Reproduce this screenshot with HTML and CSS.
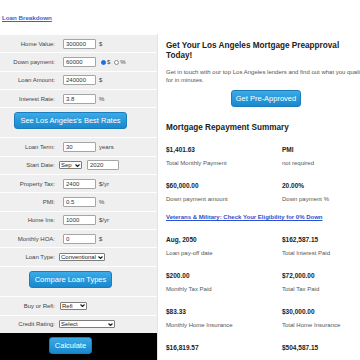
FILE: index.html
```html
<!DOCTYPE html>
<html lang="en">
<head>
    <meta charset="UTF-8">
    <meta name="viewport" content="width=device-width, initial-scale=1.0">
    <title>Los Angeles Mortgage Calculator</title>
    <link rel="stylesheet" href="styles.css">
</head>
<body>

    <div class="top">
        <a href="#">Loan Breakdown</a>
    </div>

    <div class="main">
        <!-- Left side (calculator form) -->
        <form class="calc">
            <div class="row">
                <label>Home Value:</label>
                <input type="text" value="300000"><span>$</span>
            </div>
            <div class="row">
                <label>Down payment:</label>
                <input type="text" value="60000">
                <input type="radio" name="dp" class="radio" checked><span>$</span>
                <input type="radio" name="dp" class="radio second"><span>%</span>
            </div>
            <div class="row">
                <label>Loan Amount:</label>
                <input type="text" value="240000"><span>$</span>
            </div>
            <div class="row">
                <label>Interest Rate:</label>
                <input type="text" value="3.8"><span>%</span>
            </div>
            <div class="row btn-row">
                <button type="button" class="btn">See Los Angeles's Best Rates</button>
            </div>
            <div class="row">
                <label>Loan Term:</label>
                <input type="text" value="30"><span>years</span>
            </div>
            <div class="row">
                <label>Start Date:</label>
                <div class="sel w-month">
                    <select><option>Sep</option></select>
                    <svg viewBox="0 0 5 3"><path d="M0.5 0.5 L2.5 2.5 L4.5 0.5"/></svg>
                </div>
                <input type="text" class="year" value="2020">
            </div>
            <div class="row">
                <label>Property Tax:</label>
                <input type="text" value="2400"><span>$/yr</span>
            </div>
            <div class="row">
                <label>PMI:</label>
                <input type="text" value="0.5"><span>%</span>
            </div>
            <div class="row">
                <label>Home Ins:</label>
                <input type="text" value="1000"><span>$/yr</span>
            </div>
            <div class="row">
                <label>Monthly HOA:</label>
                <input type="text" value="0"><span>$</span>
            </div>
            <div class="row">
                <label>Loan Type:</label>
                <div class="sel w-type">
                    <select><option>Conventional</option></select>
                    <svg viewBox="0 0 5 3"><path d="M0.5 0.5 L2.5 2.5 L4.5 0.5"/></svg>
                </div>
            </div>
            <div class="row btn-row">
                <button type="button" class="btn">Compare Loan Types</button>
            </div>
            <div class="row">
                <label>Buy or Refi:</label>
                <div class="sel w-refi">
                    <select><option>Refi</option></select>
                    <svg viewBox="0 0 5 3"><path d="M0.5 0.5 L2.5 2.5 L4.5 0.5"/></svg>
                </div>
            </div>
            <div class="row">
                <label>Credit Rating:</label>
                <div class="sel w-credit">
                    <select><option>Select</option></select>
                    <svg viewBox="0 0 5 3"><path d="M0.5 0.5 L2.5 2.5 L4.5 0.5"/></svg>
                </div>
            </div>
            <div class="calc-bar">
                <button type="button" class="btn">Calculate</button>
            </div>
        </form>

        <!-- Right side (results) -->
        <div class="results">
            <h2>Get Your Los Angeles Mortgage Preapproval Today!</h2>
            <p>Get in touch with our top Los Angeles lenders and find out what you qualify for in minutes.</p>
            <div class="pre">
                <button type="button" class="btn">Get Pre-Approved</button>
            </div>

            <h2 class="summary-title">Mortgage Repayment Summary</h2>
            <div class="summary">
                <div><div class="val">$1,401.63</div><div class="lbl">Total Monthly Payment</div></div>
                <div><div class="val">PMI</div><div class="lbl">not required</div></div>

                <div><div class="val">$60,000.00</div><div class="lbl">Down payment amount</div></div>
                <div><div class="val">20.00%</div><div class="lbl">Down payment %</div></div>

                <a href="#" class="vet">Veterans &amp; Military: Check Your Eligibility for 0% Down</a>

                <div><div class="val">Aug, 2050</div><div class="lbl">Loan pay-off date</div></div>
                <div><div class="val">$162,587.15</div><div class="lbl">Total Interest Paid</div></div>

                <div><div class="val">$200.00</div><div class="lbl">Monthly Tax Paid</div></div>
                <div><div class="val">$72,000.00</div><div class="lbl">Total Tax Paid</div></div>

                <div><div class="val">$83.33</div><div class="lbl">Monthly Home Insurance</div></div>
                <div><div class="val">$30,000.00</div><div class="lbl">Total Home Insurance</div></div>

                <div><div class="val">$16,819.57</div></div>
                <div><div class="val">$504,587.15</div></div>
            </div>
        </div>
    </div>

</body>
</html>
```

FILE: styles.css
```css
html, body {
    overflow: hidden;
}
body {
    margin: 0;
    font-family: "Liberation Sans", Arial, sans-serif;
    background-color: #fff;
    width: 360px;
    height: 360px;
}
.top {
    height: 34px;
    display: flex;
    align-items: center;
    padding-left: 2px;
}
.top a {
    font-size: 6.2px;
    font-weight: bold;
    color: #3a62c4;
}
.main {
    display: flex;
    align-items: flex-start;
}
/* Calculator */
.calc {
    width: 157px;
    flex: none;
    margin: 0;
    background-color: #efefef;
    border-right: 1px solid #e3e3e3;
}
.row {
    display: flex;
    align-items: center;
    height: 18.35px;
    box-sizing: border-box;
    border-top: 1px solid #fff;
    font-size: 6px;
    color: #444;
}
.row label {
    width: 55px;
    flex: none;
    text-align: right;
    margin-right: 4px;
}
.row input[type="text"] {
    width: 33px;
    height: 10px;
    box-sizing: border-box;
    margin: 0 3px 0 4px;
    padding: 0 2px;
    border: 1px solid #a5a5a5;
    border-radius: 1px;
    font: 6px "Liberation Sans", Arial, sans-serif;
    color: #333;
    background: #fff;
}
.row input.year {
    width: 32px;
    margin-left: 5px;
}
.radio {
    appearance: none;
    width: 5px;
    height: 5px;
    margin: 0 1px 0 2px;
    border: 1px solid #8a8a8a;
    border-radius: 50%;
    background: #fff;
    box-sizing: border-box;
}
.radio:checked {
    background: #1f6fe0;
    border-color: #1f6fe0;
}
.radio.second {
    margin-left: 4px;
}
.sel {
    position: relative;
    display: flex;
}
.sel select {
    appearance: none;
    width: 100%;
    height: 8px;
    box-sizing: border-box;
    padding: 0 0 0 1px;
    border: 1px solid #7d7d7d;
    border-radius: 1px;
    background: #fff;
    font: 6px/6px "Liberation Sans", Arial, sans-serif;
    color: #222;
}
.sel svg {
    position: absolute;
    right: 2px;
    top: 2.5px;
    width: 5px;
    height: 3px;
    fill: none;
    stroke: #222;
    stroke-width: 1.2;
}
.w-month { width: 23px; }
.w-type { width: 46px; }
.w-refi { width: 27px; margin-left: 1px; }
.w-credit { width: 56px; }
.btn-row {
    height: 30px;
    align-items: flex-start;
    justify-content: center;
    padding: 4px 16px 0 0;
}
.btn-row:nth-child(13) {
    height: 30.5px;
}
.btn {
    height: 17px;
    padding: 0 5px;
    border: 1px solid #1c7dbd;
    border-radius: 3px;
    background: linear-gradient(#3aaae8, #1988cd);
    color: #fff;
    font: 7.5px "Liberation Sans", Arial, sans-serif;
    cursor: pointer;
}
.calc-bar {
    height: 27px;
    box-sizing: border-box;
    background-color: #000;
    display: flex;
    justify-content: center;
    align-items: flex-start;
    padding: 4.5px 16px 0 0;
}
/* Results */
.results {
    width: 200px;
    flex: none;
    padding: 7px 0 0 8px;
}
.results h2 {
    margin: 0;
    font-size: 8.2px;
    line-height: 10px;
    color: #222;
}
.results p {
    margin: 6.75px 0 0;
    font-size: 6px;
    line-height: 8.5px;
    color: #555;
}
.pre {
    display: flex;
    justify-content: center;
    margin-top: 5.25px;
}
.pre .btn {
    padding: 0 3.5px;
}
.results h2.summary-title {
    margin-top: 16.3px;
}
.summary {
    display: grid;
    grid-template-columns: 116px 1fr;
    row-gap: 15px;
    margin-top: 12.7px;
}
.val {
    font-size: 6.5px;
    font-weight: bold;
    line-height: 8px;
    color: #222;
    white-space: nowrap;
}
.lbl {
    margin-top: 5px;
    font-size: 6px;
    line-height: 8px;
    color: #555;
    white-space: nowrap;
}
.vet {
    grid-column: 1 / -1;
    margin-top: -5px;
    font-size: 6px;
    line-height: 8px;
    font-weight: bold;
    color: #2b50d0;
}
```
